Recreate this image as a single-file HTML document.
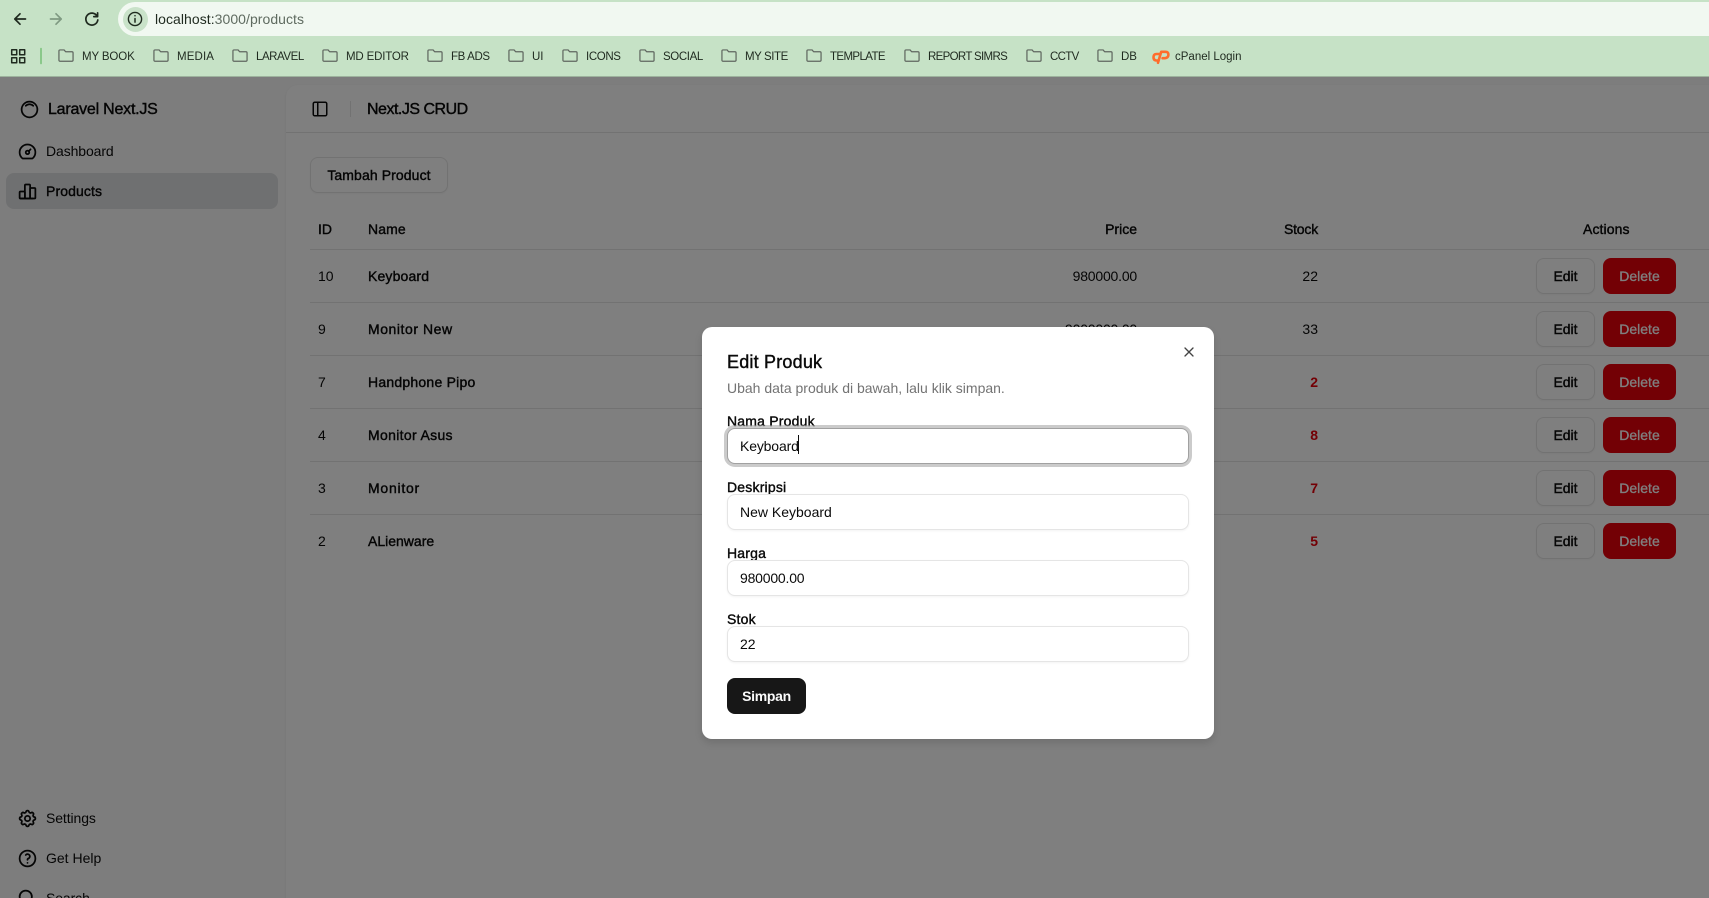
<!DOCTYPE html>
<html><head><meta charset="utf-8"><title>Products</title>
<style>
*{box-sizing:border-box}
html,body{margin:0;padding:0;width:1709px;height:898px;overflow:hidden;background:#fff;font-family:"Liberation Sans",sans-serif;color:#0a0a0a}
body{position:relative}
.a{position:absolute}
.t{position:absolute;white-space:nowrap;line-height:20px;font-size:14px}
.m{-webkit-text-stroke:.4px currentColor}
.r{text-align:right}
.b{position:absolute;font-size:11.500px;line-height:16px;top:49px;white-space:nowrap;color:#1f2a1f}
.f{position:absolute;top:49px;width:16px;height:13.200px}
svg{position:absolute;fill:none;stroke:currentColor;stroke-linecap:round;stroke-linejoin:round;overflow:visible}
.line{position:absolute;left:310px;width:1399px;height:1px;background:#e5e5e5}
.edit{position:absolute;left:1536px;width:59px;height:36px;border:1px solid #e5e5e5;border-radius:8px;background:#fff;font-size:14px;line-height:34px;text-align:center;-webkit-text-stroke:.4px currentColor;box-shadow:0 1px 2px rgba(0,0,0,.05)}
.del{position:absolute;left:1603px;width:73px;height:36px;border-radius:8px;background:#e7000b;color:#fff;font-size:14px;line-height:36px;text-align:center;-webkit-text-stroke:.3px currentColor}
.inp{position:absolute;left:25px;width:462px;height:36px;border:1px solid #e5e5e5;border-radius:8px;background:#fff;font-size:14px;line-height:34px;padding-left:12px;box-shadow:0 1px 2px rgba(0,0,0,.05)}
.l{position:absolute;left:25px;font-size:14px;line-height:20px;white-space:nowrap;letter-spacing:.2px;-webkit-text-stroke:.4px currentColor}
</style></head><body>

<!-- browser chrome -->
<div class="a" style="left:0;top:0;width:1709px;height:77px;background:#c6e2c6;border-bottom:1px solid #9db39d"></div>
<div class="a" style="left:118px;top:2px;width:1620px;height:34px;border-radius:17px;background:#f1f8f1"></div>
<div class="a" style="left:123px;top:7px;width:25px;height:25px;border-radius:50%;background:#c9e2c9"></div>
<svg width="1709" height="76" style="left:0;top:0;color:#1f2a1f" viewBox="0 0 1709 76">
<path d="M25.500 19H15M20 13.800 14.800 19l5.200 5.200" stroke-width="1.700"/>
<path d="M50.500 19H61M56 13.800 61.200 19 56 24.200" stroke-width="1.700" stroke="#7f9a82"/>
<path d="M97 16a6 6 0 1 0 .8 4M97.600 12.800v3.800h-3.800" stroke-width="1.700"/>
<circle cx="135" cy="19" r="6.600" stroke-width="1.400"/><path d="M135 18.500v3.600M135 15.600v.2" stroke-width="1.500"/>
<g stroke-width="1.500"><rect x="11.700" y="49.700" width="5" height="5"/><rect x="19.700" y="49.700" width="5" height="5"/><rect x="11.700" y="57.700" width="5" height="5"/><rect x="19.700" y="57.700" width="5" height="5"/></g>
<path d="M41 48.500v15" stroke="#76c076" stroke-width="1.500"/>
</svg>
<div class="t" style="left:155px;top:9px;color:#5f6b60;letter-spacing:.05px"><span style="color:#1f2a1f">localhost:</span>3000/products</div>

<svg class="f" style="left:58px;color:#5f665f" viewBox="0 0 17 14"><path d="M1 2.200q0-1.200 1.200-1.200h4.300l1.600 1.900h6.700q1.200 0 1.200 1.200v7.700q0 1.200-1.200 1.200H2.200Q1 13 1 11.800z" stroke-width="1.300"/></svg>
<div class="b" style="left:82px;letter-spacing:-.12px">MY BOOK</div>
<svg class="f" style="left:153px;color:#5f665f" viewBox="0 0 17 14"><path d="M1 2.200q0-1.200 1.200-1.200h4.300l1.600 1.900h6.700q1.200 0 1.200 1.200v7.700q0 1.200-1.200 1.200H2.200Q1 13 1 11.800z" stroke-width="1.300"/></svg>
<div class="b" style="left:177px;letter-spacing:.13px">MEDIA</div>
<svg class="f" style="left:232px;color:#5f665f" viewBox="0 0 17 14"><path d="M1 2.200q0-1.200 1.200-1.200h4.300l1.600 1.900h6.700q1.200 0 1.200 1.200v7.700q0 1.200-1.200 1.200H2.200Q1 13 1 11.800z" stroke-width="1.300"/></svg>
<div class="b" style="left:256px;letter-spacing:-.45px">LARAVEL</div>
<svg class="f" style="left:322px;color:#5f665f" viewBox="0 0 17 14"><path d="M1 2.200q0-1.200 1.200-1.200h4.300l1.600 1.900h6.700q1.200 0 1.200 1.200v7.700q0 1.200-1.200 1.200H2.200Q1 13 1 11.800z" stroke-width="1.300"/></svg>
<div class="b" style="left:346px;letter-spacing:-.17px">MD EDITOR</div>
<svg class="f" style="left:427px;color:#5f665f" viewBox="0 0 17 14"><path d="M1 2.200q0-1.200 1.200-1.200h4.300l1.600 1.900h6.700q1.200 0 1.200 1.200v7.700q0 1.200-1.200 1.200H2.200Q1 13 1 11.800z" stroke-width="1.300"/></svg>
<div class="b" style="left:451px;letter-spacing:-.37px">FB ADS</div>
<svg class="f" style="left:508px;color:#5f665f" viewBox="0 0 17 14"><path d="M1 2.200q0-1.200 1.200-1.200h4.300l1.600 1.900h6.700q1.200 0 1.200 1.200v7.700q0 1.200-1.200 1.200H2.200Q1 13 1 11.800z" stroke-width="1.300"/></svg>
<div class="b" style="left:532px">UI</div>
<svg class="f" style="left:562px;color:#5f665f" viewBox="0 0 17 14"><path d="M1 2.200q0-1.200 1.200-1.200h4.300l1.600 1.900h6.700q1.200 0 1.200 1.200v7.700q0 1.200-1.200 1.200H2.200Q1 13 1 11.800z" stroke-width="1.300"/></svg>
<div class="b" style="left:586px;letter-spacing:-.37px">ICONS</div>
<svg class="f" style="left:639px;color:#5f665f" viewBox="0 0 17 14"><path d="M1 2.200q0-1.200 1.200-1.200h4.300l1.600 1.900h6.700q1.200 0 1.200 1.200v7.700q0 1.200-1.200 1.200H2.200Q1 13 1 11.800z" stroke-width="1.300"/></svg>
<div class="b" style="left:663px;letter-spacing:-.37px">SOCIAL</div>
<svg class="f" style="left:721px;color:#5f665f" viewBox="0 0 17 14"><path d="M1 2.200q0-1.200 1.200-1.200h4.300l1.600 1.900h6.700q1.200 0 1.200 1.200v7.700q0 1.200-1.200 1.200H2.200Q1 13 1 11.800z" stroke-width="1.300"/></svg>
<div class="b" style="left:745px;letter-spacing:-.42px">MY SITE</div>
<svg class="f" style="left:806px;color:#5f665f" viewBox="0 0 17 14"><path d="M1 2.200q0-1.200 1.200-1.200h4.300l1.600 1.900h6.700q1.200 0 1.200 1.200v7.700q0 1.200-1.200 1.200H2.200Q1 13 1 11.800z" stroke-width="1.300"/></svg>
<div class="b" style="left:830px;letter-spacing:-.62px">TEMPLATE</div>
<svg class="f" style="left:904px;color:#5f665f" viewBox="0 0 17 14"><path d="M1 2.200q0-1.200 1.200-1.200h4.300l1.600 1.900h6.700q1.200 0 1.200 1.200v7.700q0 1.200-1.200 1.200H2.200Q1 13 1 11.800z" stroke-width="1.300"/></svg>
<div class="b" style="left:928px;letter-spacing:-.67px">REPORT SIMRS</div>
<svg class="f" style="left:1026px;color:#5f665f" viewBox="0 0 17 14"><path d="M1 2.200q0-1.200 1.200-1.200h4.300l1.600 1.900h6.700q1.200 0 1.200 1.200v7.700q0 1.200-1.200 1.200H2.200Q1 13 1 11.800z" stroke-width="1.300"/></svg>
<div class="b" style="left:1050px;letter-spacing:-.65px">CCTV</div>
<svg class="f" style="left:1097px;color:#5f665f" viewBox="0 0 17 14"><path d="M1 2.200q0-1.200 1.200-1.200h4.300l1.600 1.900h6.700q1.200 0 1.200 1.200v7.700q0 1.200-1.200 1.200H2.200Q1 13 1 11.800z" stroke-width="1.300"/></svg>
<div class="b" style="left:1121px;letter-spacing:-.07px">DB</div>
<svg width="18" height="14" style="left:1152px;top:50px;color:#ff6c2c" viewBox="0 0 18 14"><path d="M8 4H4.600Q1.600 4 1.500 7T4 10.500h2.400M6 12.800 9.200 1.800h4.300q3 0 2.900 3T13 8.200h-2.400" stroke-width="2.600"/></svg>
<div class="b" style="left:1175px;letter-spacing:0">cPanel Login</div>

<!-- sidebar -->
<div class="a" style="left:0;top:77px;width:1709px;height:821px;background:#fafafa"></div>
<div class="a" style="left:286px;top:85px;width:1423px;height:813px;background:#fff;border-top-left-radius:12px;box-shadow:0 1px 2px rgba(0,0,0,.08)"></div>
<svg width="21" height="21" viewBox="0 0 24 24" stroke-width="2" style="left:19px;top:99px"><path d="M5.636 5.636a9 9 0 1 0 12.728 12.728a9 9 0 0 0 -12.728 -12.728z"/><path d="M16.243 7.757a6 6 0 0 0 -8.486 0"/></svg>
<div class="t m" style="left:48px;top:100px;font-size:16px;letter-spacing:-.22px">Laravel Next.JS</div>
<svg width="21" height="21" viewBox="0 0 24 24" stroke-width="2" style="left:17px;top:140.500px"><path d="M12 13m-2 0a2 2 0 1 0 4 0a2 2 0 1 0 -4 0"/><path d="M13.450 11.550l2.050 -2.050"/><path d="M6.400 20a9 9 0 1 1 11.200 0z"/></svg>
<div class="t" style="left:46px;top:141px;letter-spacing:-.1px">Dashboard</div>
<div class="a" style="left:6px;top:173px;width:272px;height:36px;border-radius:8px;background:#dfe0e3"></div>
<svg width="21" height="21" viewBox="0 0 24 24" stroke-width="2" style="left:17px;top:180.500px"><path d="M3 13a1 1 0 0 1 1 -1h4a1 1 0 0 1 1 1v6a1 1 0 0 1 -1 1h-4a1 1 0 0 1 -1 -1z"/><path d="M15 9a1 1 0 0 1 1 -1h4a1 1 0 0 1 1 1v10a1 1 0 0 1 -1 1h-4a1 1 0 0 1 -1 -1z"/><path d="M9 5a1 1 0 0 1 1 -1h4a1 1 0 0 1 1 1v14a1 1 0 0 1 -1 1h-4a1 1 0 0 1 -1 -1z"/><path d="M4 20h14"/></svg>
<div class="t m" style="left:46px;top:181px;letter-spacing:.1px">Products</div>
<svg width="21" height="21" viewBox="0 0 24 24" stroke-width="2" style="left:17px;top:807.500px"><path d="M10.325 4.317c.426 -1.756 2.924 -1.756 3.350 0a1.724 1.724 0 0 0 2.573 1.066c1.543 -.94 3.310 .826 2.370 2.370a1.724 1.724 0 0 0 1.065 2.572c1.756 .426 1.756 2.924 0 3.350a1.724 1.724 0 0 0 -1.066 2.573c.94 1.543 -.826 3.310 -2.370 2.370a1.724 1.724 0 0 0 -2.572 1.065c-.426 1.756 -2.924 1.756 -3.350 0a1.724 1.724 0 0 0 -2.573 -1.066c-1.543 .94 -3.310 -.826 -2.370 -2.370a1.724 1.724 0 0 0 -1.065 -2.572c-1.756 -.426 -1.756 -2.924 0 -3.350a1.724 1.724 0 0 0 1.066 -2.573c-.94 -1.543 .826 -3.310 2.370 -2.370c1 .608 2.296 .07 2.572 -1.065z"/><path d="M9 12a3 3 0 1 0 6 0a3 3 0 0 0 -6 0"/></svg>
<div class="t" style="left:46px;top:808px;letter-spacing:-.1px">Settings</div>
<svg width="21" height="21" viewBox="0 0 24 24" stroke-width="2" style="left:17px;top:847.500px"><path d="M12 12m-9 0a9 9 0 1 0 18 0a9 9 0 1 0 -18 0"/><path d="M12 17l0 .01"/><path d="M12 13.500a1.500 1.500 0 0 1 1 -1.500a2.600 2.600 0 1 0 -3 -4"/></svg>
<div class="t" style="left:46px;top:848px">Get Help</div>
<svg width="21" height="21" viewBox="0 0 24 24" stroke-width="2" style="left:17px;top:887.500px"><path d="M10 10m-7 0a7 7 0 1 0 14 0a7 7 0 1 0 -14 0"/><path d="M21 21l-6 -6"/></svg>
<div class="t" style="left:46px;top:888px;letter-spacing:-.1px">Search</div>

<!-- main header -->
<svg width="18" height="18" viewBox="0 0 24 24" stroke-width="2" style="left:311px;top:100px"><rect x="3" y="3" width="18" height="18" rx="2"/><path d="M9 3v18"/></svg>
<div class="a" style="left:350px;top:101px;width:1px;height:16px;background:#e5e5e5"></div>
<div class="t m" style="left:367px;top:100px;font-size:16px;letter-spacing:-.5px">Next.JS CRUD</div>
<div class="a" style="left:286px;top:132px;width:1423px;height:1px;background:#e5e5e5"></div>

<div class="a" style="left:310px;top:157px;width:138px;height:36px;border:1px solid #e5e5e5;border-radius:8px;background:#fff;font-size:14px;line-height:34px;text-align:center;letter-spacing:.1px;-webkit-text-stroke:.4px currentColor;box-shadow:0 1px 2px rgba(0,0,0,.05)">Tambah Product</div>

<!-- table -->
<div class="t m" style="left:318px;top:219px">ID</div>
<div class="t m" style="left:368px;top:219px;letter-spacing:.1px">Name</div>
<div class="t m r" style="left:1037px;width:100px;top:219px">Price</div>
<div class="t m r" style="left:1218px;width:100px;top:219px;letter-spacing:-.2px">Stock</div>
<div class="t m" style="left:1583px;top:219px;letter-spacing:.1px">Actions</div>
<div class="line" style="top:249px"></div>
<div class="line" style="top:302px"></div>
<div class="line" style="top:355px"></div>
<div class="line" style="top:408px"></div>
<div class="line" style="top:461px"></div>
<div class="line" style="top:514px"></div>

<div class="t" style="left:318px;top:266px">10</div><div class="t m" style="left:368px;top:266px;letter-spacing:.15px">Keyboard</div><div class="t r" style="left:1037px;width:100px;top:266px;letter-spacing:-.2px">980000.00</div><div class="t r" style="left:1218px;width:100px;top:266px">22</div><div class="edit" style="top:258px">Edit</div><div class="del" style="top:258px">Delete</div>
<div class="t" style="left:318px;top:319px">9</div><div class="t m" style="left:368px;top:319px;letter-spacing:.55px">Monitor New</div><div class="t r" style="left:1037px;width:100px;top:319px;letter-spacing:-.2px">9000000.00</div><div class="t r" style="left:1218px;width:100px;top:319px">33</div><div class="edit" style="top:311px">Edit</div><div class="del" style="top:311px">Delete</div>
<div class="t" style="left:318px;top:372px">7</div><div class="t m" style="left:368px;top:372px;letter-spacing:.23px">Handphone Pipo</div><div class="t r" style="left:1218px;width:100px;top:372px;color:#e7000b;font-weight:bold">2</div><div class="edit" style="top:364px">Edit</div><div class="del" style="top:364px">Delete</div>
<div class="t" style="left:318px;top:425px">4</div><div class="t m" style="left:368px;top:425px;letter-spacing:.33px">Monitor Asus</div><div class="t r" style="left:1218px;width:100px;top:425px;color:#e7000b;font-weight:bold">8</div><div class="edit" style="top:417px">Edit</div><div class="del" style="top:417px">Delete</div>
<div class="t" style="left:318px;top:478px">3</div><div class="t m" style="left:368px;top:478px;letter-spacing:.75px">Monitor</div><div class="t r" style="left:1218px;width:100px;top:478px;color:#e7000b;font-weight:bold">7</div><div class="edit" style="top:470px">Edit</div><div class="del" style="top:470px">Delete</div>
<div class="t" style="left:318px;top:531px">2</div><div class="t m" style="left:368px;top:531px">ALienware</div><div class="t r" style="left:1218px;width:100px;top:531px;color:#e7000b;font-weight:bold">5</div><div class="edit" style="top:523px">Edit</div><div class="del" style="top:523px">Delete</div>

<!-- overlay -->
<div class="a" style="left:0;top:77px;width:1709px;height:821px;background:rgba(0,0,0,.5)"></div>

<!-- modal -->
<div class="a" style="left:702px;top:327px;width:512px;height:412px;background:#fff;border-radius:10px;box-shadow:0 4px 8px rgba(0,0,0,.12)">
  <div class="t m" style="left:25px;top:24.500px;font-size:18px;letter-spacing:.2px">Edit Produk</div>
  <div class="t" style="left:25px;top:51px;color:#737373">Ubah data produk di bawah, lalu klik simpan.</div>
  <svg width="16" height="16" viewBox="0 0 24 24" stroke-width="2" style="left:479px;top:17px;color:#444"><path d="M18 6 6 18M6 6l12 12"/></svg>
  <div class="l" style="top:84px">Nama Produk</div>
  <div class="inp" style="top:101px;border-color:#a1a1a1;box-shadow:0 0 0 3px rgba(161,161,161,.55);letter-spacing:-.15px">Keyboard</div>
  <div class="a" style="left:96px;top:108px;width:1px;height:19px;background:#0a0a0a"></div>
  <div class="l" style="top:150px">Deskripsi</div>
  <div class="inp" style="top:167px">New Keyboard</div>
  <div class="l" style="top:216px">Harga</div>
  <div class="inp" style="top:233px;letter-spacing:-.2px">980000.00</div>
  <div class="l" style="top:282px">Stok</div>
  <div class="inp" style="top:299px">22</div>
  <div class="a" style="left:25px;top:351px;width:79px;height:36px;border-radius:8px;background:#171717;color:#fafafa;font-size:14px;line-height:36px;text-align:center;font-weight:bold;letter-spacing:-.3px">Simpan</div>
</div>
</body></html>
